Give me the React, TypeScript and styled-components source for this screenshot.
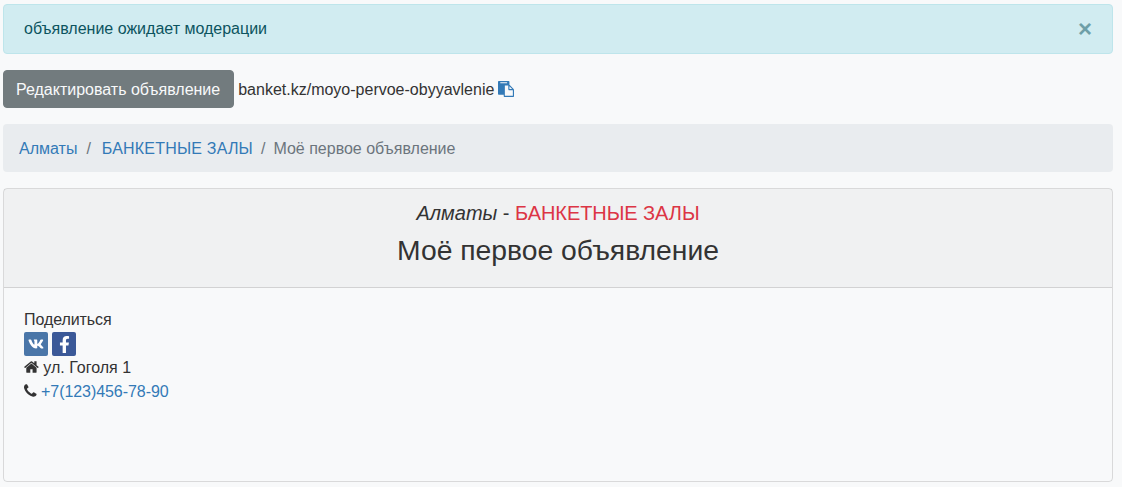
import React from "react";
import styled, { createGlobalStyle } from "styled-components";
import { FaVk, FaFacebookF } from "react-icons/fa";

const Global = createGlobalStyle`
  html, body { margin: 0; padding: 0; background: #f8f9fa; }
  body { font-family: "Liberation Sans", Arial, sans-serif; font-size: 16px; line-height: 24px; color: #333; }
  a { color: #337ab7; text-decoration: none; }
`;

const Page = styled.div`
  display: flex;
  flex-direction: column;
  padding: 4px 9px 0 3px;
  height: 482px;
  box-sizing: border-box;
  overflow: hidden;
`;

const Alert = styled.div`
  display: flex;
  justify-content: space-between;
  align-items: center;
  height: 50px;
  box-sizing: border-box;
  padding: 12px 20px;
  margin-bottom: 16px;
  background: #d1ecf1;
  border: 1px solid #bee5eb;
  border-radius: 4px;
  color: #0c5460;
`;

const Close = styled.span`
  font-size: 24px;
  font-weight: 700;
  line-height: 24px;
  color: #0c5460;
  opacity: 0.5;
`;

const ActionRow = styled.div`
  display: flex;
  align-items: center;
  gap: 4px;
  margin-bottom: 16px;
`;

const Button = styled.a`
  display: block;
  height: 38px;
  box-sizing: border-box;
  padding: 6px 13px 6px 12px;
  border: 1px solid #727b7e;
  border-radius: 4px;
  background: #727b7e;
  color: #f8f9fa;
  line-height: 26px;
`;

const LinkText = styled.span`
  padding-top: 2px;
`;

const FaSvg = styled.svg`
  fill: currentColor;
  height: 16px;
  vertical-align: -2px;
`;

const CopyGlyph = styled(FaSvg)`
  color: #337ab7;
  width: 16px;
  margin-left: 4px;
`;

const Breadcrumb = styled.nav`
  display: flex;
  height: 48px;
  box-sizing: border-box;
  padding: 13px 16px 11px;
  margin-bottom: 16px;
  background: #e9ecef;
  border-radius: 4px;
  color: #6c757d;
`;

const Sep = styled.span<{ $wide?: boolean }>`
  padding: 0 ${(p) => (p.$wide ? "11px" : "8px")} 0 ${(p) => (p.$wide ? "9px" : "8px")};
`;

const CrumbCaps = styled.a`
  letter-spacing: 0.2px;
`;

const Card = styled.section`
  flex: 1;
  display: flex;
  flex-direction: column;
  border: 1px solid rgba(0, 0, 0, 0.125);
  border-radius: 4px;
`;

const CardHeader = styled.header`
  height: 99px;
  box-sizing: border-box;
  padding: 12px 20px;
  text-align: center;
  background: rgba(0, 0, 0, 0.03);
  border-bottom: 1px solid rgba(0, 0, 0, 0.125);
`;

const Kicker = styled.div`
  font-size: 20px;
  line-height: 24px;
`;

const Category = styled.span`
  color: #dc3545;
  letter-spacing: -0.07px;
`;

const Title = styled.h1`
  margin: 8px 0 0;
  font-size: 28.3px;
  font-weight: 400;
  line-height: 34px;
`;

const CardBody = styled.div`
  padding: 20px;
`;

const ShareLabel = styled.div`
  letter-spacing: -0.08px;
`;

const Socials = styled.div`
  display: flex;
  gap: 4px;
  height: 24px;
`;

const Social = styled.a<{ $bg: string; $size: number }>`
  display: flex;
  align-items: center;
  justify-content: center;
  width: 24px;
  height: 24px;
  border-radius: 2px;
  background: ${(p) => p.$bg};
  color: #fff;
  font-size: ${(p) => p.$size}px;
`;

const InfoLine = styled.div`
  height: 24px;
`;

const PhoneLink = styled.a`
  letter-spacing: -0.06px;
`;

const HomeGlyph = styled(FaSvg)`
  width: 14.86px;
`;

const PhoneGlyph = styled(FaSvg)`
  width: 12.57px;
`;

export default function App() {
  return (
    <>
      <Global />
      <Page>
        <Alert>
          <span>объявление ожидает модерации</span>
          <Close>×</Close>
        </Alert>
        <ActionRow>
          <Button href="#">Редактировать объявление</Button>
          <LinkText>
            banket.kz/moyo-pervoe-obyyavlenie
            <CopyGlyph viewBox="0 0 1792 1792">
              <path d="M768 1664h896v-640h-416q-40 0-68-28t-28-68v-416h-384v1152zm256-1440v-64q0-13-9.500-22.500t-22.500-9.500h-704q-13 0-22.500 9.500t-9.500 22.500v64q0 13 9.500 22.500t22.500 9.500h704q13 0 22.500-9.500t9.500-22.500zm256 672h299l-299-299v299zm512 128v672q0 40-28 68t-68 28h-960q-40 0-68-28t-28-68v-160h-544q-40 0-68-28t-28-68v-1344q0-40 28-68t68-28h1088q40 0 68 28t28 68v328q21 13 36 28l408 408q28 28 48 76t20 88z" />
            </CopyGlyph>
          </LinkText>
        </ActionRow>
        <Breadcrumb>
          <a href="#">Алматы</a>
          <Sep $wide>/</Sep>
          <CrumbCaps href="#">БАНКЕТНЫЕ ЗАЛЫ</CrumbCaps>
          <Sep>/</Sep>
          <span>Моё первое объявление</span>
        </Breadcrumb>
        <Card>
          <CardHeader>
            <Kicker>
              <em>Алматы</em> - <Category>БАНКЕТНЫЕ ЗАЛЫ</Category>
            </Kicker>
            <Title>Моё первое объявление</Title>
          </CardHeader>
          <CardBody>
            <ShareLabel>Поделиться</ShareLabel>
            <Socials>
              <Social href="#" $bg="#4a76a8" $size={16}><FaVk /></Social>
              <Social href="#" $bg="#3b5998" $size={17}><FaFacebookF /></Social>
            </Socials>
            <InfoLine>
              <HomeGlyph viewBox="64 0 1664 1792">
                <path d="M1472 992v480q0 26-19 45t-45 19h-384v-384h-256v384h-384q-26 0-45-19t-19-45v-480q0-1 .5-3t.5-3l575-474 575 474q1 2 1 6zm223-69l-62 74q-8 9-21 11h-3q-13 0-21-7l-692-577-692 577q-12 8-24 7-13-2-21-11l-62-74q-8-10-7-23.500t11-21.500l719-599q32-26 76-26t76 26l244 204v-195q0-14 9-23t23-9h192q14 0 23 9t9 23v408l219 182q10 8 11 21.500t-7 23.500z" />
              </HomeGlyph>{" "}
              ул. Гоголя 1
            </InfoLine>
            <InfoLine>
              <PhoneGlyph viewBox="192 0 1408 1792">
                <path d="M1600 1240q0 27-10 70.500t-21 68.500q-21 50-122 106-94 51-186 51-27 0-53-3.500t-57.500-12.500-47-14.500-55.500-20.500-49-18q-98-35-175-83-127-79-264-216t-216-264q-48-77-83-175-3-9-18-49t-20.500-55.500-14.500-47-12.500-57.500-3.500-53q0-92 51-186 56-101 106-122 25-11 68.500-21t70.500-10q14 0 21 3 18 6 53 76 11 19 30 54t35 63.500 31 53.500q3 4 17.500 25t21.500 35.500 7 28.500q0 20-28.500 50t-62 55-62 53-28.500 46q0 9 5 22.500t8.500 20.500 14 24 11.500 19q76 137 174 235t235 174q2 1 19 11.500t24 14 20.500 8.500 22.500 5q18 0 46-28.500t53-62 55-62 50-28.500q14 0 28.500 7t35.500 21.500 25 17.500q25 15 53.500 31t63.500 35 54 30q70 35 76 53 3 7 3 21z" />
              </PhoneGlyph>{" "}
              <PhoneLink href="#">+7(123)456-78-90</PhoneLink>
            </InfoLine>
          </CardBody>
        </Card>
      </Page>
    </>
  );
}
